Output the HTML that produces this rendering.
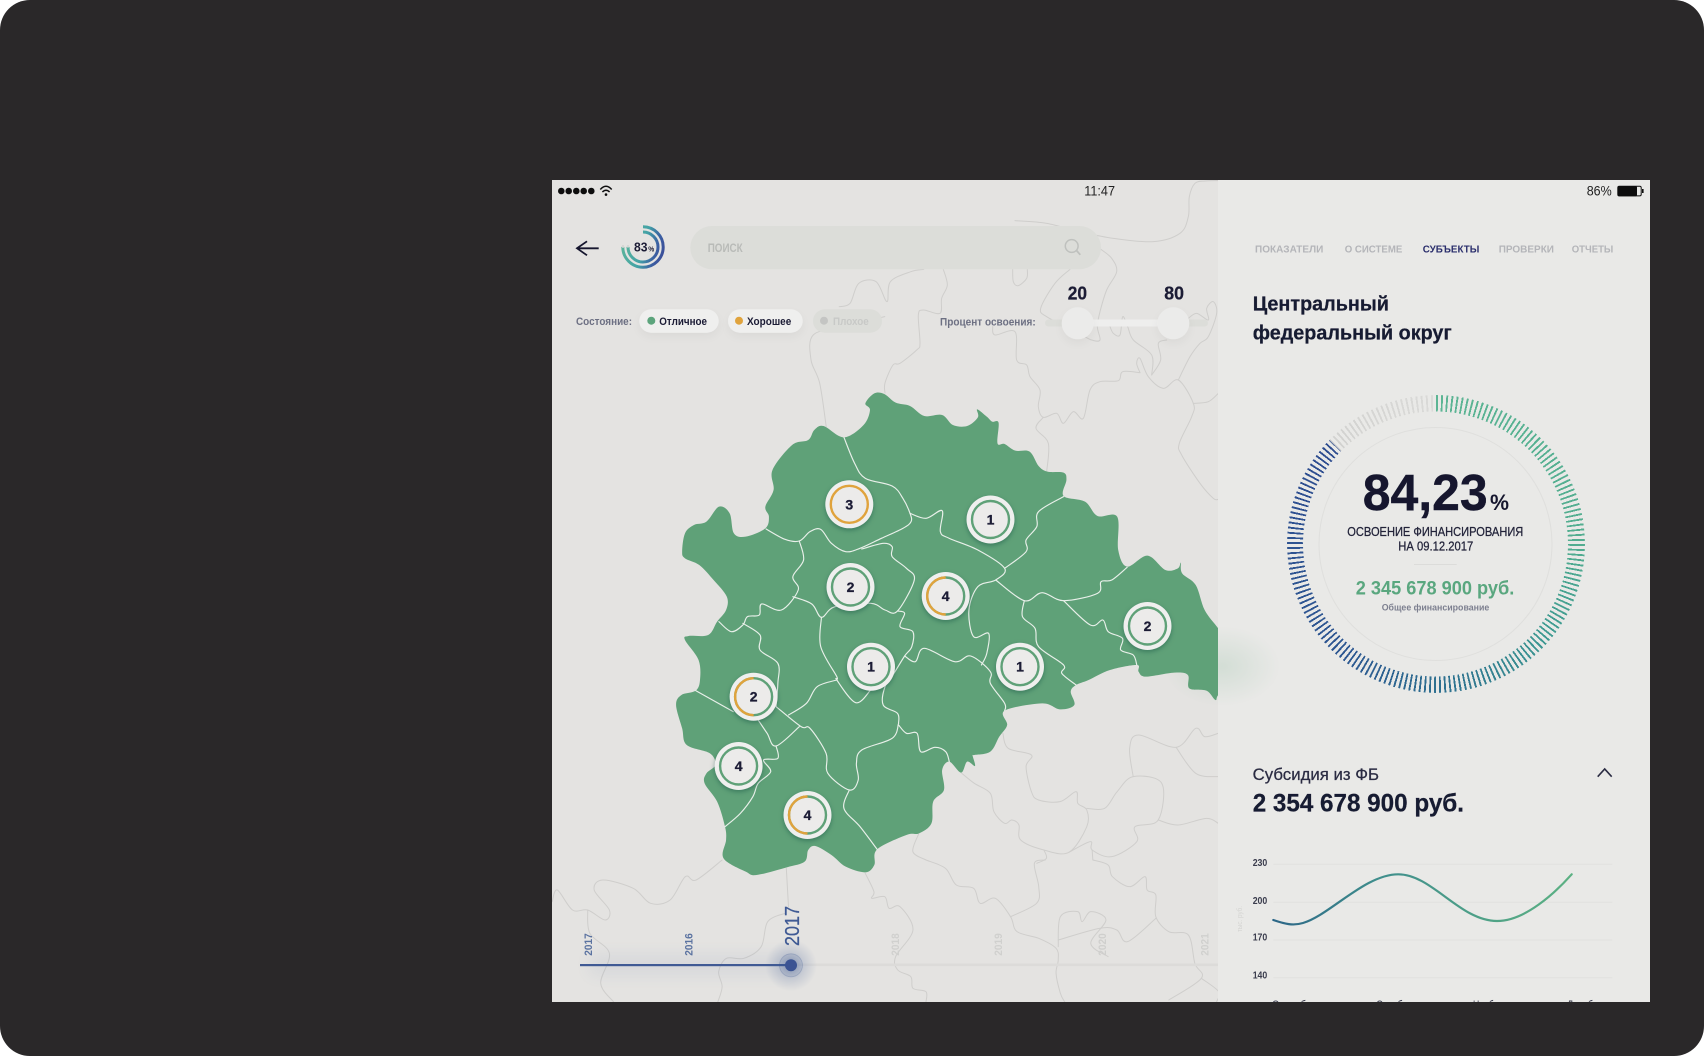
<!DOCTYPE html>
<html lang="ru"><head><meta charset="utf-8"><title>Центральный федеральный округ</title>
<style>
html,body{margin:0;padding:0;background:#fff}
svg{display:block}
text{font-family:"Liberation Sans","DejaVu Sans",sans-serif;font-weight:700;fill:#1b1b35}
.n{font-weight:400}
.m{stroke:#22243a;stroke-width:.25}
.d{stroke:#181a30;stroke-width:.25}
.s polyline,.s path.x{fill:none;vector-effect:non-scaling-stroke;stroke-linejoin:round;stroke-linecap:round}
.bg polyline,.bg path.x{stroke:#cfcecc;stroke-width:1}
.ln polyline,.ln path.x{stroke:#e9f0ea;stroke-width:1.15}
.tab{font-size:10.5px;fill:#b4b5b9}
.mk{filter:drop-shadow(0 2px 2.5px rgba(25,85,70,.5))}
.mk text{font-size:14px;text-anchor:middle;stroke:#1b1b35;stroke-width:.3}
</style></head><body>
<svg xmlns="http://www.w3.org/2000/svg" width="1704" height="1056" viewBox="0 0 1704 1056">
<defs>
<clipPath id="scr"><rect x="552" y="180" width="1098" height="822"/></clipPath>
<linearGradient id="dg" gradientUnits="userSpaceOnUse" x1="648" y1="226" x2="636" y2="268"><stop offset="0" stop-color="#5bb59a"/><stop offset=".5" stop-color="#43a2a6"/><stop offset=".8" stop-color="#3a5fa2"/><stop offset="1" stop-color="#3b4d98"/></linearGradient>
<linearGradient id="cg" gradientUnits="userSpaceOnUse" x1="1273" y1="0" x2="1572" y2="0"><stop offset="0" stop-color="#2c6687"/><stop offset=".35" stop-color="#3f8e8c"/><stop offset="1" stop-color="#5cb183"/></linearGradient>
<radialGradient id="gl"><stop offset="0" stop-color="#5fa178" stop-opacity=".16"/><stop offset="1" stop-color="#5fa178" stop-opacity="0"/></radialGradient>
<radialGradient id="bl"><stop offset="0" stop-color="#3f5a94" stop-opacity=".5"/><stop offset=".5" stop-color="#3f5a94" stop-opacity=".18"/><stop offset="1" stop-color="#3f5a94" stop-opacity="0"/></radialGradient>
<filter id="sh" x="-30%" y="-30%" width="160%" height="180%"><feDropShadow dx="0" dy="4" stdDeviation="4" flood-color="#000" flood-opacity=".045"/></filter>
<filter id="bb" x="0" y="0" width="100%" height="100%"><feGaussianBlur stdDeviation=".3"/></filter>
<filter id="bg8" x="-20%" y="-300%" width="140%" height="700%"><feGaussianBlur stdDeviation="8"/></filter>
</defs>
<rect width="1704" height="1056" fill="#fff"/>
<rect width="1704" height="1056" rx="30" fill="#2a2829"/>
<g clip-path="url(#scr)"><g filter="url(#bb)">
<rect x="552" y="180" width="1098" height="822" fill="#e4e3e1"/>

<g class="s bg" transform="translate(900 180) scale(.33333)">
<polyline points="345,122 440,130 540,155 640,175 760,185 840,160 865,110 868,50 885,10 915,3 955,2"/>
<polyline points="603,208 635,235 650,275 620,330 600,395 592,440 600,480 575,480 540,462"/>
<polyline points="510,268 465,310 422,385 440,410 490,435"/>
<polyline points="338,268 340,305 355,317 380,295 382,268"/>
<polyline points="130,268 142,315 125,355 120,400 70,390 55,405 60,490 50,510 0,550 -21,555 -45,609 -45,639"/>
<polyline points="278,440 285,465 345,455 350,540 380,555 390,590 420,630 415,680 430,712 470,700 490,730 520,695 550,715 570,630 600,605 655,602 668,575 720,578"/>
<polyline points="430,712 408,745 445,790 440,875"/>
<polyline points="720,578 710,550 720,535 745,590 790,625 835,600 880,670 875,710 838,790 845,825 900,910 940,955 955,958"/>
<polyline points="880,670 925,665 955,640"/>
<polyline points="755,585 755,525 700,480 683,440 668,410 660,465 640,460 630,440"/>
<polyline points="755,585 782,540 775,490 800,480"/>
<polyline points="835,600 870,530 900,490 925,470 950,400 940,365 920,385 925,420 890,400 865,415"/>
</g>
<g class="s bg" transform="translate(540 170) scale(.43367 .33333)">
<polyline points="885,298 855,305 808,335 800,395 775,335 735,340 715,400 690,410"/>
<polyline points="795,440 700,470 630,495 625,570 645,640 660,770"/>
</g>
<g class="s bg" transform="translate(660 380) scale(.35714 .33333)">
<polyline points="960,1060 975,1105 1040,1125 1025,1160 1040,1235 1060,1260 1120,1265 1165,1235 1170,1270 1195,1290 1195,1340 1145,1417 1075,1410 1010,1380 1005,1335 985,1320 965,1330 935,1295 925,1240 880,1210 845,1180"/>
<polyline points="1195,1285 1245,1285 1280,1235 1325,1190 1405,1210 1395,1320 1330,1340 1335,1385 1265,1430 1210,1410 1205,1385 1145,1417"/>
<polyline points="1325,1190 1315,1105 1340,1065 1445,1102 1500,1045 1525,1070 1563,1060"/>
<polyline points="1445,1102 1500,1180 1563,1190"/>
<polyline points="1395,1320 1450,1335 1530,1315 1563,1330"/>
<polyline points="1075,1410 1082,1435 1055,1450"/>
<polyline points="725,1360 708,1415 745,1440"/>
<polyline points="1210,1410 1212,1440"/>
</g>
<g class="s bg" transform="translate(540 860) scale(.43367 .33333)">
<polyline points="568,25 573,140"/>
<polyline points="420,0 360,60 335,50 300,120 255,130 215,85 145,60 125,90 160,150 150,180 110,150 75,150 40,90 28,125"/>
<polyline points="110,150 115,220 160,280 140,370 170,426"/>
<polyline points="565,160 525,185 510,260 470,295 430,295 412,335 420,380 410,426"/>
<polyline points="750,40 770,95 765,115 795,110 805,145 830,140 860,210 820,290 825,330 855,350 860,385 890,395 890,426"/>
<polyline points="890,0 935,25 960,75 1000,85 1015,130 1050,115 1085,170 1100,215 1150,235 1190,265 1195,300 1190,340 1200,400 1210,426"/>
<polyline points="1085,170 1145,130 1150,80 1140,10 1165,0"/>
<polyline points="1275,0 1310,15 1320,50 1360,80 1395,50 1400,90 1420,105 1420,170 1450,215 1495,225 1510,310 1525,355 1450,420"/>
<polyline points="1525,355 1565,395 1560,426"/>
<polyline points="1195,260 1200,170 1240,155 1250,185 1270,155 1305,180 1270,250 1310,290"/>
<polyline points="1195,240 1290,205 1330,210 1355,245 1420,175"/>
</g>

<g class="s" transform="translate(660 380) scale(.35714 .33333)">
<polygon fill="#5fa178" points="575,70 600,40 628,42 660,68 700,78 740,108 790,105 820,135 860,138 890,112 888,88 915,110 930,125 948,128 945,190 965,192 995,212 1035,215 1060,258 1085,275 1130,278 1138,300 1130,348 1190,365 1225,408 1280,410 1283,510 1308,560 1365,527 1415,570 1450,565 1458,548 1462,580 1500,615 1525,690 1563,745 1600,800 1600,905 1563,945 1555,960 1530,932 1482,925 1478,885 1440,878 1360,890 1340,875 1335,855 1260,870 1200,900 1165,915 1150,935 1160,975 1120,988 1070,970 965,992 972,1035 950,1070 925,1115 880,1125 875,1125 882,1158 860,1145 843,1178 810,1145 790,1170 795,1230 765,1265 760,1330 725,1360 690,1365 608,1408 600,1455 575,1477 520,1460 480,1425 435,1398 415,1410 405,1445 355,1462 270,1485 240,1475 178,1435 185,1380 182,1340 160,1265 125,1210 130,1180 155,1155 140,1120 75,1095 62,1045 45,975 60,945 100,932 112,900 108,840 70,780 80,768 135,765 160,725 185,690 187,650 150,600 110,555 70,535 62,515 70,460 95,435 130,425 165,380 195,400 207,460 240,470 295,445 305,410 295,380 318,330 315,270 370,195 415,180 432,150 458,138 515,172 570,135 588,90"/>
</g>
<g class="s ln" transform="translate(660 380) scale(.35714 .33333)">
<polyline points="515,172 545,250 575,295 650,318 680,355 700,400 703,425 680,445 620,475 560,505 520,515 480,490 450,448 420,455 390,483 350,478 297,447"/>
<polyline points="390,483 402,540 372,590 387,630 340,690 285,672 278,705 245,710 232,735 200,755 165,725"/>
<polyline points="372,650 425,672 452,712 490,680 590,670 630,690 665,693 712,600 690,565 650,530 650,500 625,490 565,507"/>
<polyline points="700,400 745,415 790,392 785,455 810,475 890,510 965,565 940,600 890,620 865,690 878,770 920,760 915,820 900,855"/>
<polyline points="965,565 1025,515 1025,480 1055,440 1060,395 1130,350"/>
<polyline points="940,600 1020,662 1070,638 1130,662 1225,640 1235,605 1265,600 1308,562"/>
<polyline points="1130,662 1205,735 1240,720 1255,755 1295,775 1290,810 1325,825 1335,855"/>
<polyline points="1020,662 1015,710 1050,745 1060,800 1130,855 1125,880 1165,915"/>
<polyline points="452,712 450,800 495,890 495,900 548,968 590,930"/>
<polyline points="495,900 440,920 410,970 360,1005"/>
<polyline points="665,693 685,700 672,740 708,755 705,800 685,828 655,880 630,920 625,975 665,1000 668,1030"/>
<polyline points="668,1030 650,1075 565,1110 550,1150 555,1200 530,1230 470,1180 465,1120 420,1045 395,1040 325,980"/>
<polyline points="100,932 205,995"/>
<polyline points="390,1040 325,1098 300,1060 275,1020"/>
<polyline points="325,1098 330,1135 290,1140 310,1175 275,1210 260,1250 225,1300 182,1340"/>
<polyline points="530,1230 515,1285 560,1340 608,1408"/>
<polyline points="685,828 715,845 740,805 825,845 870,828 925,875 925,910 965,970 965,992"/>
<polyline points="668,1035 690,1060 720,1060 730,1115 770,1102 800,1115 810,1145"/>
<polyline points="232,730 280,765 280,810 330,850 330,910 325,980"/>
</g>

<!-- markers -->
<g class="mk"><circle cx="849.3" cy="504.3" r="24" fill="#efefee"/><circle cx="849.3" cy="504.3" r="18.5" fill="#ecebea" stroke="#e0a33c" stroke-width="2.4"/><text x="849.3" y="509.3">3</text></g>
<g class="mk"><circle cx="990.5" cy="519.5" r="24" fill="#efefee"/><circle cx="990.5" cy="519.5" r="18.5" fill="#ecebea" stroke="#5fa178" stroke-width="2.4"/><text x="990.5" y="524.5">1</text></g>
<g class="mk"><circle cx="850.5" cy="587" r="24" fill="#efefee"/><circle cx="850.5" cy="587" r="18.5" fill="#ecebea" stroke="#5fa178" stroke-width="2.4"/><text x="850.5" y="592">2</text></g>
<g class="mk"><circle cx="945.7" cy="596" r="24" fill="#efefee"/><circle cx="945.7" cy="596" r="18.5" fill="#ecebea" stroke="#5fa178" stroke-width="2.4"/><path d="M945.7 577.5A18.5 18.5 0 0 0 945.7 614.5" fill="none" stroke="#e0a33c" stroke-width="2.4"/><text x="945.7" y="601">4</text></g>
<g class="mk"><circle cx="871" cy="666.7" r="24" fill="#efefee"/><circle cx="871" cy="666.7" r="18.5" fill="#ecebea" stroke="#5fa178" stroke-width="2.4"/><text x="871" y="671.7">1</text></g>
<g class="mk"><circle cx="1020" cy="666.7" r="24" fill="#efefee"/><circle cx="1020" cy="666.7" r="18.5" fill="#ecebea" stroke="#5fa178" stroke-width="2.4"/><text x="1020" y="671.7">1</text></g>
<g class="mk"><circle cx="1147.5" cy="626" r="24" fill="#efefee"/><circle cx="1147.5" cy="626" r="18.5" fill="#ecebea" stroke="#5fa178" stroke-width="2.4"/><text x="1147.5" y="631">2</text></g>
<g class="mk"><circle cx="753.6" cy="696.7" r="24" fill="#efefee"/><circle cx="753.6" cy="696.7" r="18.5" fill="#ecebea" stroke="#5fa178" stroke-width="2.4"/><path d="M753.6 678.2A18.5 18.5 0 0 0 753.6 715.2" fill="none" stroke="#e0a33c" stroke-width="2.4"/><text x="753.6" y="701.7">2</text></g>
<g class="mk"><circle cx="738.6" cy="766" r="24" fill="#efefee"/><circle cx="738.6" cy="766" r="18.5" fill="#ecebea" stroke="#5fa178" stroke-width="2.4"/><text x="738.6" y="771">4</text></g>
<g class="mk"><circle cx="807.5" cy="815" r="24" fill="#efefee"/><circle cx="807.5" cy="815" r="18.5" fill="#ecebea" stroke="#5fa178" stroke-width="2.4"/><path d="M807.5 796.5A18.5 18.5 0 0 0 807.5 833.5" fill="none" stroke="#e0a33c" stroke-width="2.4"/><text x="807.5" y="820">4</text></g>

<!-- status bar -->
<circle cx="561.3" cy="191" r="3.3" fill="#111"/><circle cx="568.7" cy="191" r="3.3" fill="#111"/><circle cx="576.3" cy="191" r="3.3" fill="#111"/><circle cx="583.7" cy="191" r="3.3" fill="#111"/><circle cx="591.3" cy="191" r="3.3" fill="#111"/>
<path d="M600.3 189.5Q606 183 611.7 189.5M602.4 192Q606 188.5 609.6 192" fill="none" stroke="#111" stroke-width="1.5"/><circle cx="606" cy="194.6" r="1.3" fill="#111"/>
<text class="n" x="1084.3" y="195.7" font-size="13.5" textLength="30.7" lengthAdjust="spacingAndGlyphs" style="fill:#222">11:47</text>

<!-- header -->
<path d="M598.7 248.3H577M587 241.3L577 248.3L587 255.3" fill="none" stroke="#14162e" stroke-width="1.8"/>
<circle cx="643" cy="247" r="20.2" fill="none" stroke="url(#dg)" stroke-width="3" stroke-dasharray="95.2 200" transform="rotate(-90 643 247)"/>
<circle cx="643" cy="247" r="15" fill="none" stroke="url(#dg)" stroke-width="3" stroke-dasharray="70.7 200" transform="rotate(-90 643 247)"/>
<path d="M623 247.8V245M628 247.5V245" stroke="#d6d6d4" stroke-width="2"/>
<text x="634" y="251.3" font-size="13" textLength="13.5" lengthAdjust="spacingAndGlyphs">83</text>
<text x="648.3" y="251.3" font-size="7" textLength="6" lengthAdjust="spacingAndGlyphs">%</text>
<rect x="690.3" y="226" width="410.7" height="43.3" rx="21.65" fill="#dcddd9"/>
<text x="707.7" y="252" font-size="11.5" textLength="35" lengthAdjust="spacingAndGlyphs" style="fill:#b9bbb8">ПОИСК</text>
<circle cx="1071.7" cy="246" r="6.4" fill="none" stroke="#bfc1be" stroke-width="1.5"/><path d="M1076.5 250.5L1080.3 254.8" stroke="#bfc1be" stroke-width="1.8"/>

<text x="576" y="325" font-size="11" textLength="56" lengthAdjust="spacingAndGlyphs" style="fill:#6d7083">Состояние:</text>
<rect x="639.3" y="309.3" width="79.4" height="23.4" rx="11.7" fill="#efefee" filter="url(#sh)"/>
<circle cx="651.3" cy="320.7" r="4" fill="#5ca47c"/>
<text x="659.3" y="325" font-size="11" textLength="47.7" lengthAdjust="spacingAndGlyphs">Отличное</text>
<rect x="728" y="309.3" width="74.7" height="23.4" rx="11.7" fill="#efefee" filter="url(#sh)"/>
<circle cx="739" cy="320.7" r="4" fill="#e0a33c"/>
<text x="747" y="325" font-size="11" textLength="44.3" lengthAdjust="spacingAndGlyphs">Хорошее</text>
<rect x="813" y="309.3" width="69" height="23.4" rx="11.7" fill="#dcddd9"/>
<circle cx="824" cy="320.7" r="4" fill="#c4c5c3"/>
<text x="833" y="325" font-size="11" textLength="35.7" lengthAdjust="spacingAndGlyphs" style="fill:#c8c9c7">Плохое</text>

<text x="940" y="325.7" font-size="11" textLength="95.7" lengthAdjust="spacingAndGlyphs" style="fill:#6d7083">Процент освоения:</text>
<rect x="1045" y="319.5" width="163" height="7" rx="3.5" fill="#dcddd9"/>
<rect x="1078" y="319.5" width="96" height="7" fill="#eeeeed"/>
<circle cx="1077.7" cy="323.3" r="16" fill="#ebebea" filter="url(#sh)"/>
<circle cx="1173.3" cy="323.3" r="16" fill="#ebebea" filter="url(#sh)"/>
<text class="d" x="1067.7" y="299.3" font-size="18" textLength="19.3" lengthAdjust="spacingAndGlyphs">20</text>
<text class="d" x="1164.3" y="299.3" font-size="18" textLength="19.7" lengthAdjust="spacingAndGlyphs">80</text>

<!-- timeline -->
<rect x="790" y="963.5" width="428" height="2.6" fill="#dcdbd9"/>
<rect x="590" y="955" width="200" height="20" fill="#3f5a94" opacity=".08" filter="url(#bg8)"/>
<rect x="580" y="964" width="211" height="2.2" fill="#3f5a94"/>
<circle cx="791" cy="965.3" r="26" fill="url(#bl)"/>
<circle cx="791" cy="965.3" r="11.5" fill="#3f5a94" fill-opacity=".1" stroke="#3f5a94" stroke-opacity=".25" stroke-width=".8"/>
<circle cx="791" cy="965.3" r="6" fill="#3a5393"/>
<text transform="translate(592 955.7) rotate(-90)" font-size="11" textLength="22.4" lengthAdjust="spacingAndGlyphs" style="fill:#5a72a0">2017</text>
<text transform="translate(692.6 955.7) rotate(-90)" font-size="11" textLength="22.4" lengthAdjust="spacingAndGlyphs" style="fill:#5a72a0">2016</text>
<text class="n m" transform="translate(798.9 946) rotate(-90)" font-size="20" textLength="40" lengthAdjust="spacingAndGlyphs" style="fill:#3f5a94;stroke:#3f5a94">2017</text>
<text transform="translate(899 955.7) rotate(-90)" font-size="11" textLength="22.4" lengthAdjust="spacingAndGlyphs" style="fill:#d0d0ce">2018</text>
<text transform="translate(1001.8 955.7) rotate(-90)" font-size="11" textLength="22.4" lengthAdjust="spacingAndGlyphs" style="fill:#d0d0ce">2019</text>
<text transform="translate(1105.9 955.7) rotate(-90)" font-size="11" textLength="22.4" lengthAdjust="spacingAndGlyphs" style="fill:#cfcfcd">2020</text>
<text transform="translate(1208.7 955.7) rotate(-90)" font-size="11" textLength="22.4" lengthAdjust="spacingAndGlyphs" style="fill:#d0d0ce">2021</text>

<!-- right panel -->
<rect x="1218" y="180" width="432" height="822" fill="#e9e9e7"/>
<ellipse cx="1222" cy="666" rx="58" ry="40" fill="url(#gl)"/>
<text class="n" x="1586.7" y="195.7" font-size="13.5" textLength="25" lengthAdjust="spacingAndGlyphs" style="fill:#222">86%</text>
<rect x="1617.8" y="186.3" width="23.4" height="9.6" rx="1.5" fill="none" stroke="#111"/>
<rect x="1617.5" y="186" width="19.5" height="10.2" rx="1.5" fill="#111"/>
<rect x="1642" y="189" width="1.6" height="4" fill="#111"/>

<text class="tab" x="1255" y="252.3" textLength="68.3" lengthAdjust="spacingAndGlyphs">ПОКАЗАТЕЛИ</text>
<text class="tab" x="1344.7" y="252.3" textLength="57.6" lengthAdjust="spacingAndGlyphs">О СИСТЕМЕ</text>
<text class="tab" x="1422.7" y="252.3" textLength="56.6" lengthAdjust="spacingAndGlyphs" style="fill:#2c2f6c">СУБЪЕКТЫ</text>
<text class="tab" x="1498.7" y="252.3" textLength="55.3" lengthAdjust="spacingAndGlyphs">ПРОВЕРКИ</text>
<text class="tab" x="1571.7" y="252.3" textLength="41.6" lengthAdjust="spacingAndGlyphs">ОТЧЕТЫ</text>

<text class="d" x="1252.7" y="310.7" font-size="20" textLength="136.3" lengthAdjust="spacingAndGlyphs" style="fill:#181a30">Центральный</text>
<text class="d" x="1252.7" y="339.3" font-size="20" textLength="199" lengthAdjust="spacingAndGlyphs" style="fill:#181a30">федеральный округ</text>

<foreignObject x="1286.5" y="395" width="298" height="298"><div xmlns="http://www.w3.org/1999/xhtml" style="width:298px;height:298px;border-radius:50%;background:conic-gradient(from 0deg,#5cb594 0deg,#52ad90 90deg,#3f9a92 130deg,#2f7590 170deg,#2f5892 220deg,#2d4d90 314deg,#d2d2d0 314.5deg,#dadad8 360deg);-webkit-mask:repeating-conic-gradient(from 0deg,#000 0deg .75deg,transparent .75deg 2deg);mask:repeating-conic-gradient(from 0deg,#000 0deg .75deg,transparent .75deg 2deg)"></div></foreignObject>
<circle cx="1435.5" cy="544" r="132.5" fill="#e9e9e7"/>
<circle cx="1435.5" cy="544" r="116.5" fill="#e9e9e7" stroke="#dfdfdd" stroke-width="1"/>

<text x="1362.7" y="510" font-size="51" textLength="125" lengthAdjust="spacingAndGlyphs" style="fill:#14162e;stroke:#14162e;stroke-width:.4">84,23</text>
<text x="1490" y="510" font-size="22" textLength="19" lengthAdjust="spacingAndGlyphs" style="fill:#14162e">%</text>
<text class="n m" x="1347.3" y="536" font-size="12.5" textLength="176" lengthAdjust="spacingAndGlyphs" style="fill:#22243a">ОСВОЕНИЕ ФИНАНСИРОВАНИЯ</text>
<text class="n m" x="1398.3" y="550.7" font-size="12.5" textLength="75" lengthAdjust="spacingAndGlyphs" style="fill:#22243a">НА 09.12.2017</text>
<rect x="1414" y="564" width="42.7" height="1" fill="#dcdcda"/>
<text x="1355.7" y="594.3" font-size="19" textLength="158.6" lengthAdjust="spacingAndGlyphs" style="fill:#5aa77f">2 345 678 900 руб.</text>
<text x="1381.7" y="610.7" font-size="9.5" textLength="107.6" lengthAdjust="spacingAndGlyphs" style="fill:#7c7f8f">Общее финансирование</text>

<text class="n" x="1252.7" y="780" font-size="16.5" textLength="126.3" lengthAdjust="spacingAndGlyphs" style="fill:#2a2c42;stroke:#2a2c42;stroke-width:.25">Субсидия из ФБ</text>
<text class="d" x="1252.7" y="811.7" font-size="25" textLength="211.3" lengthAdjust="spacingAndGlyphs" style="fill:#181a30">2 354 678 900 руб.</text>
<path d="M1597.7 776.7L1604.7 769L1611.7 776.7" fill="none" stroke="#2a2c42" stroke-width="1.6"/>

<path d="M1273.3 864.3H1612.3M1273.3 902.3H1612.3M1273.3 940H1612.3M1273.3 977.7H1612.3" stroke="#e1e1df" stroke-width="1"/>
<text x="1252.7" y="866" font-size="10" textLength="14.6" lengthAdjust="spacingAndGlyphs" style="fill:#3a3c4e">230</text>
<text x="1252.7" y="904" font-size="10" textLength="14.6" lengthAdjust="spacingAndGlyphs" style="fill:#3a3c4e">200</text>
<text x="1252.7" y="940.7" font-size="10" textLength="14.6" lengthAdjust="spacingAndGlyphs" style="fill:#3a3c4e">170</text>
<text x="1252.7" y="978.3" font-size="10" textLength="14.6" lengthAdjust="spacingAndGlyphs" style="fill:#3a3c4e">140</text>
<text class="n" transform="translate(1242 932) rotate(-90)" font-size="7" textLength="26" lengthAdjust="spacingAndGlyphs" style="fill:#d5d5d3">тыс. руб.</text>
<path fill="none" stroke="url(#cg)" stroke-width="2.2" stroke-linecap="round" d="M1273.3 920C1285 924 1293 926 1303 923C1330 915 1365 874.3 1398.3 874.3C1432 874.3 1460 921 1497 921C1525 921 1555 893 1571.7 874.3"/>
<text class="n" x="1271.7" y="1009" font-size="11.5" textLength="45.3" lengthAdjust="spacingAndGlyphs" style="fill:#3a3c4e">Сентябрь</text>
<text class="n" x="1376" y="1009" font-size="11.5" textLength="37" lengthAdjust="spacingAndGlyphs" style="fill:#3a3c4e">Октябрь</text>
<text class="n" x="1473" y="1009" font-size="11.5" textLength="30" lengthAdjust="spacingAndGlyphs" style="fill:#3a3c4e">Ноябрь</text>
<text class="n" x="1567" y="1009" font-size="11.5" textLength="36" lengthAdjust="spacingAndGlyphs" style="fill:#3a3c4e">Декабрь</text>
</g></g>
</svg>
<script>
(function(){
var NS="http://www.w3.org/2000/svg";
document.querySelectorAll("polyline,polygon").forEach(function(el){
  var closed=el.tagName==="polygon";
  var n=el.getAttribute("points").trim().split(/\s+/).map(function(s){return s.split(",").map(Number)});
  var L=n.length,d="M"+n[0][0]+" "+n[0][1];
  function P(i){return closed?n[(i+L)%L]:n[Math.max(0,Math.min(L-1,i))]}
  var end=closed?L:L-1;
  for(var i=0;i<end;i++){
    var a=P(i-1),b=P(i),c=P(i+1),e=P(i+2);
    d+="C"+(b[0]+(c[0]-a[0])/6).toFixed(1)+" "+(b[1]+(c[1]-a[1])/6).toFixed(1)+" "+(c[0]-(e[0]-b[0])/6).toFixed(1)+" "+(c[1]-(e[1]-b[1])/6).toFixed(1)+" "+c[0]+" "+c[1];
  }
  if(closed)d+="Z";
  var p=document.createElementNS(NS,"path");
  p.setAttribute("d",d);
  ["fill","stroke","stroke-width","stroke-linecap"].forEach(function(k){if(el.hasAttribute(k))p.setAttribute(k,el.getAttribute(k))});
  if(!closed)p.setAttribute("class","x");
  el.parentNode.replaceChild(p,el);
});
})();
</script>
</body></html>
